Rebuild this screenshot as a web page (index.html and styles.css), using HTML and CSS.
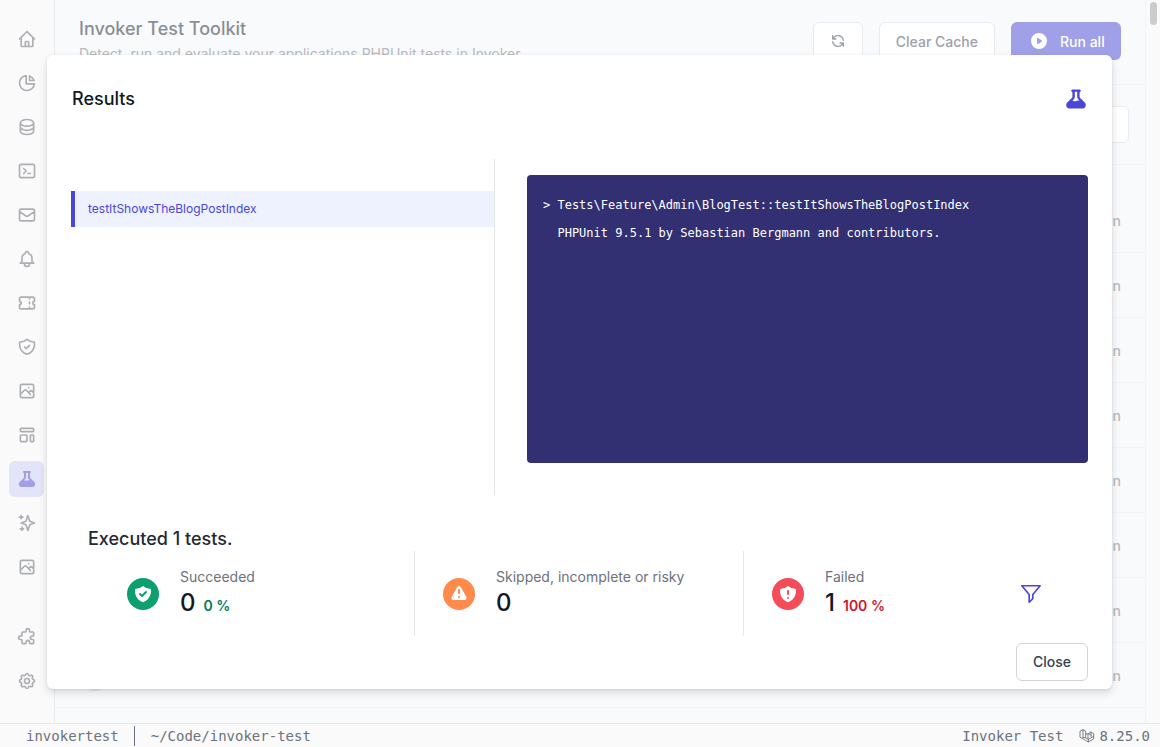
FILE: index.html
```html
<!DOCTYPE html>
<html lang="en">

<head>
	<meta charset="utf-8" />
	<meta name="viewport" content="width=device-width, initial-scale=1" />
	<title>Invoker Test Toolkit</title>
	<link rel="stylesheet" href="styles.css">
</head>

<body>
	<div class="app">
		<div class="shell">
			<nav class="sidebar">
				<div class="nav-group">
					<a class="nav-item"><svg viewBox="0 0 24 24"><path d="M3 12l2-2m0 0l7-7 7 7M5 10v10a1 1 0 001 1h3m10-11l2 2m-2-2v10a1 1 0 01-1 1h-3m-6 0a1 1 0 001-1v-4a1 1 0 011-1h2a1 1 0 011 1v4a1 1 0 001 1m-6 0h6"/></svg></a>
					<a class="nav-item"><svg viewBox="0 0 24 24"><path d="M11 3.055A9.001 9.001 0 1020.945 13H11V3.055z"/><path d="M20.488 9H15V3.512A9.025 9.025 0 0120.488 9z"/></svg></a>
					<a class="nav-item"><svg viewBox="0 0 24 24"><path d="M4 7v10c0 2.21 3.582 4 8 4s8-1.79 8-4V7M4 7c0 2.21 3.582 4 8 4s8-1.79 8-4M4 7c0-2.21 3.582-4 8-4s8 1.79 8 4m0 5c0 2.21-3.582 4-8 4s-8-1.79-8-4"/></svg></a>
					<a class="nav-item"><svg viewBox="0 0 24 24"><path d="M8 9l3 3-3 3m5 0h3M5 20h14a2 2 0 002-2V6a2 2 0 00-2-2H5a2 2 0 00-2 2v12a2 2 0 002 2z"/></svg></a>
					<a class="nav-item"><svg viewBox="0 0 24 24"><path d="M3 8l7.89 5.26a2 2 0 002.22 0L21 8M5 19h14a2 2 0 002-2V7a2 2 0 00-2-2H5a2 2 0 00-2 2v10a2 2 0 002 2z"/></svg></a>
					<a class="nav-item"><svg viewBox="0 0 24 24"><path d="M15 17h5l-1.405-1.405A2.032 2.032 0 0118 14.158V11a6.002 6.002 0 00-4-5.659V5a2 2 0 10-4 0v.341C7.67 6.165 6 8.388 6 11v3.159c0 .538-.214 1.055-.595 1.436L4 17h5m6 0v1a3 3 0 11-6 0v-1m6 0H9"/></svg></a>
					<a class="nav-item"><svg viewBox="0 0 24 24"><path d="M15 5v2m0 4v2m0 4v2M5 5a2 2 0 00-2 2v3a2 2 0 110 4v3a2 2 0 002 2h14a2 2 0 002-2v-3a2 2 0 110-4V7a2 2 0 00-2-2H5z"/></svg></a>
					<a class="nav-item"><svg viewBox="0 0 24 24"><path d="M9 12l2 2 4-4m5.618-4.016A11.955 11.955 0 0112 2.944a11.955 11.955 0 01-8.618 3.04A12.02 12.02 0 003 9c0 5.591 3.824 10.29 9 11.622 5.176-1.332 9-6.03 9-11.622 0-1.042-.133-2.052-.382-3.016z"/></svg></a>
					<a class="nav-item"><svg viewBox="0 0 24 24"><path d="M4 16l4.586-4.586a2 2 0 012.828 0L16 16m-2-2l1.586-1.586a2 2 0 012.828 0L20 14m-6-6h.01M6 20h12a2 2 0 002-2V6a2 2 0 00-2-2H6a2 2 0 00-2 2v12a2 2 0 002 2z"/></svg></a>
					<a class="nav-item"><svg viewBox="0 0 24 24"><path d="M4 5a1 1 0 011-1h14a1 1 0 011 1v2a1 1 0 01-1 1H5a1 1 0 01-1-1V5zM4 13a1 1 0 011-1h6a1 1 0 011 1v6a1 1 0 01-1 1H5a1 1 0 01-1-1v-6zM16 13a1 1 0 011-1h2a1 1 0 011 1v6a1 1 0 01-1 1h-2a1 1 0 01-1-1v-6z"/></svg></a>
					<a class="nav-item active"><svg class="solid" viewBox="0 0 20 20"><path fill-rule="evenodd" clip-rule="evenodd" d="M7 2a1 1 0 00-.707 1.707L7 4.414v3.758a1 1 0 01-.293.707l-4 4C.817 14.769 2.156 18 4.828 18h10.343c2.673 0 4.012-3.231 2.122-5.121l-4-4A1 1 0 0113 8.172V4.414l.707-.707A1 1 0 0013 2H7zm2 6.172V4h2v4.172a3 3 0 00.879 2.12l1.027 1.028a4 4 0 00-2.171.102l-.47.156a4 4 0 01-2.53 0l-.563-.187a1.993 1.993 0 00-.114-.035l1.063-1.063A3 3 0 009 8.172z"/></svg></a>
					<a class="nav-item"><svg viewBox="0 0 24 24"><path d="M5 3v4M3 5h4M6 17v4m-2-2h4m5-16l2.286 6.857L21 12l-5.714 2.143L13 21l-2.286-6.857L5 12l5.714-2.143L13 3z"/></svg></a>
					<a class="nav-item"><svg viewBox="0 0 24 24"><path d="M4 16l4.586-4.586a2 2 0 012.828 0L16 16m-2-2l1.586-1.586a2 2 0 012.828 0L20 14m-6-6h.01M6 20h12a2 2 0 002-2V6a2 2 0 00-2-2H6a2 2 0 00-2 2v12a2 2 0 002 2z"/></svg></a>
				</div>
				<div class="nav-group">
					<a class="nav-item"><svg viewBox="0 0 24 24"><path d="M11 4a2 2 0 114 0v1a1 1 0 001 1h3a1 1 0 011 1v3a1 1 0 01-1 1h-1a2 2 0 100 4h1a1 1 0 011 1v3a1 1 0 01-1 1h-3a1 1 0 01-1-1v-1a2 2 0 10-4 0v1a1 1 0 01-1 1H7a1 1 0 01-1-1v-3a1 1 0 00-1-1H4a2 2 0 110-4h1a1 1 0 001-1V7a1 1 0 011-1h3a1 1 0 001-1V4z"/></svg></a>
					<a class="nav-item"><svg viewBox="0 0 24 24"><path d="M10.325 4.317c.426-1.756 2.924-1.756 3.35 0a1.724 1.724 0 002.573 1.066c1.543-.94 3.31.826 2.37 2.37a1.724 1.724 0 001.065 2.572c1.756.426 1.756 2.924 0 3.35a1.724 1.724 0 00-1.066 2.573c.94 1.543-.826 3.31-2.37 2.37a1.724 1.724 0 00-2.572 1.065c-.426 1.756-2.924 1.756-3.35 0a1.724 1.724 0 00-2.573-1.066c-1.543.94-3.31-.826-2.37-2.37a1.724 1.724 0 00-1.065-2.572c-1.756-.426-1.756-2.924 0-3.35a1.724 1.724 0 001.066-2.573c-.94-1.543.826-3.31 2.37-2.37.996.608 2.296.07 2.572-1.065z"/><path d="M15 12a3 3 0 11-6 0 3 3 0 016 0z"/></svg></a>
				</div>
			</nav>

			<main class="main">
				<header class="page-header">
					<div class="page-title">
						<h1>Invoker Test Toolkit</h1>
						<p>Detect, run and evaluate your applications PHPUnit tests in Invoker.</p>
					</div>
					<div class="page-actions">
						<button class="btn btn-icon"><svg viewBox="0 0 24 24"><path d="M4 4v5h.582m15.356 2A8.001 8.001 0 004.582 9m0 0H9m11 11v-5h-.581m0 0a8.003 8.003 0 01-15.357-2m15.357 2H15"/></svg></button>
						<button class="btn">Clear Cache</button>
						<button class="btn btn-primary"><svg class="solid" viewBox="0 0 20 20"><path fill-rule="evenodd" clip-rule="evenodd" d="M10 18a8 8 0 100-16 8 8 0 000 16zM9.555 7.168A1 1 0 008 8v4a1 1 0 001.555.832l3-2a1 1 0 000-1.664l-3-2z"/></svg>Run all</button>
					</div>
				</header>
				<div class="toolbar"><div class="search-box"></div></div>
				<div class="table-head"></div>
				<div class="test-row"><span class="row-avatar"></span><span class="row-action">Run</span></div>
				<div class="test-row"><span class="row-avatar"></span><span class="row-action">Run</span></div>
				<div class="test-row"><span class="row-avatar"></span><span class="row-action">Run</span></div>
				<div class="test-row"><span class="row-avatar"></span><span class="row-action">Run</span></div>
				<div class="test-row"><span class="row-avatar"></span><span class="row-action">Run</span></div>
				<div class="test-row"><span class="row-avatar"></span><span class="row-action">Run</span></div>
				<div class="test-row"><span class="row-avatar"></span><span class="row-action">Run</span></div>
				<div class="test-row"><span class="row-avatar"></span><span class="row-action">Run</span></div>
			</main>

			<div class="scrollbar"><div class="scrollbar-thumb"></div></div>

			<div class="overlay">
				<section class="modal">
					<div class="modal-header">
						<h2>Results</h2>
						<svg class="solid" viewBox="0 0 20 20"><path fill-rule="evenodd" clip-rule="evenodd" d="M7 2a1 1 0 00-.707 1.707L7 4.414v3.758a1 1 0 01-.293.707l-4 4C.817 14.769 2.156 18 4.828 18h10.343c2.673 0 4.012-3.231 2.122-5.121l-4-4A1 1 0 0113 8.172V4.414l.707-.707A1 1 0 0013 2H7zm2 6.172V4h2v4.172a3 3 0 00.879 2.12l1.027 1.028a4 4 0 00-2.171.102l-.47.156a4 4 0 01-2.53 0l-.563-.187a1.993 1.993 0 00-.114-.035l1.063-1.063A3 3 0 009 8.172z"/></svg>
					</div>
					<div class="split">
						<div class="test-list">
							<div class="test-item">testItShowsTheBlogPostIndex</div>
						</div>
						<div class="output-wrap">
							<pre class="terminal">&gt; Tests\Feature\Admin\BlogTest::testItShowsTheBlogPostIndex

  PHPUnit 9.5.1 by Sebastian Bergmann and contributors.</pre>
						</div>
					</div>
					<h3 class="summary-title">Executed 1 tests.</h3>
					<div class="stats">
						<div class="stat">
							<span class="stat-icon green"><svg class="solid" viewBox="0 0 20 20"><path fill-rule="evenodd" clip-rule="evenodd" d="M2.166 4.999A11.954 11.954 0 0010 1.944 11.954 11.954 0 0017.834 5c.11.65.166 1.32.166 2.001 0 5.225-3.34 9.67-8 11.317C5.34 16.67 2 12.225 2 7c0-.682.057-1.35.166-2.001zm11.541 3.708a1 1 0 00-1.414-1.414L9 10.586 7.707 9.293a1 1 0 00-1.414 1.414l2 2a1 1 0 001.414 0l4-4z"/></svg></span>
							<div class="stat-text">
								<div class="stat-label">Succeeded</div>
								<div class="stat-value">0<span class="stat-percent text-green">0 %</span></div>
							</div>
						</div>
						<div class="stat">
							<span class="stat-icon orange"><svg class="solid" viewBox="0 0 20 20"><path fill-rule="evenodd" clip-rule="evenodd" d="M8.257 3.099c.765-1.36 2.722-1.36 3.486 0l5.58 9.92c.75 1.334-.213 2.98-1.742 2.98H4.42c-1.53 0-2.493-1.646-1.743-2.98l5.58-9.92zM11 13a1 1 0 11-2 0 1 1 0 012 0zm-1-8a1 1 0 00-1 1v3a1 1 0 002 0V6a1 1 0 00-1-1z"/></svg></span>
							<div class="stat-text">
								<div class="stat-label">Skipped, incomplete or risky</div>
								<div class="stat-value">0</div>
							</div>
						</div>
						<div class="stat stat-last">
							<span class="stat-icon red"><svg class="solid" viewBox="0 0 20 20"><path fill-rule="evenodd" clip-rule="evenodd" d="M10 1.944A11.954 11.954 0 012.166 5C2.056 5.649 2 6.319 2 7c0 5.225 3.34 9.67 8 11.317C14.66 16.67 18 12.225 18 7c0-.682-.057-1.35-.166-2.001A11.954 11.954 0 0110 1.944zM11 14a1 1 0 11-2 0 1 1 0 012 0zm0-7a1 1 0 10-2 0v3a1 1 0 102 0V7z"/></svg></span>
							<div class="stat-text">
								<div class="stat-label">Failed</div>
								<div class="stat-value">1<span class="stat-percent text-red">100 %</span></div>
							</div>
							<svg class="filter-icon" viewBox="0 0 24 24"><path d="M2 3h20l-8 9.5V17l-4 4v-8.5L2 3z"/></svg>
						</div>
					</div>
					<div class="modal-footer">
						<button class="btn-close">Close</button>
					</div>
				</section>
			</div>
		</div>

		<footer class="statusbar">
			<div class="status-left">
				<span>invokertest</span>
				<span class="status-sep"></span>
				<span>~/Code/invoker-test</span>
			</div>
			<div class="status-right">
				<span>Invoker Test</span>
				<svg class="laravel" viewBox="0 0 18 18"><path d="M1.5 3.5l3-1.7 3 1.7v7.5l3 1.7v3l-3-1.700-6-3.400zM4.500 1.800v8.800M7.500 11l-3-.4M10.500 12.700l6-3.400v-3l-3-1.700-3 1.700zM13.500 4.600v5M10.500 6.300l3 1.700M7.500 7l3-.7M10.500 15.700l6-3.400v-3"/></svg>
				<span>8.25.0</span>
			</div>
		</footer>
	</div>
</body>

</html>
```

FILE: styles.css
```css
* {
	box-sizing: border-box;
}
body {
	margin: 0;
	background-color: #f3f4f6;
	color: #111827;
	font-family: Inter, "Noto Sans", sans-serif;
	font-size: 14px;
	overflow: hidden;
}
h1, h2, h3, p {
	margin: 0;
}
svg {
	display: block;
	fill: none;
	stroke: currentColor;
	stroke-width: 2;
	stroke-linecap: round;
	stroke-linejoin: round;
}
svg.solid {
	fill: currentColor;
	stroke: none;
}
.app {
	display: flex;
	flex-direction: column;
	height: 100vh;
}
.shell {
	position: relative;
	display: flex;
	flex: 1;
	min-height: 0;
	overflow: hidden;
}

/* sidebar */
.sidebar {
	display: flex;
	flex-direction: column;
	justify-content: space-between;
	width: 55px;
	padding: 21px 0 24px 9px;
	background-color: #f5f5f6;
	border-right: 1px solid #d1d5db;
}
.nav-group {
	display: flex;
	flex-direction: column;
	gap: 8px;
}
.nav-item {
	display: flex;
	align-items: center;
	justify-content: center;
	width: 35px;
	height: 36px;
	border-radius: 6px;
	color: #5a5f69;
}
.nav-item svg {
	width: 20px;
	height: 20px;
}
.nav-item.active {
	background-color: #c7c8ef;
	color: #3f41d1;
}

/* page behind the dialog */
.main {
	flex: 1;
	min-width: 0;
	overflow: hidden;
}
.page-header {
	display: flex;
	justify-content: space-between;
	height: 85px;
	padding: 15px 24px 0 24px;
	border-bottom: 1px solid #e5e7eb;
}
.page-title h1 {
	font-size: 18px;
	line-height: 28px;
	font-weight: 500;
}
.page-title p {
	margin-top: 1px;
	line-height: 20px;
	color: #6b7280;
}
.page-actions {
	display: flex;
	gap: 16px;
	margin-top: 7px;
	height: 38px;
}
.btn {
	display: flex;
	align-items: center;
	height: 38px;
	padding: 0 16px;
	border: 1px solid #d1d5db;
	border-radius: 6px;
	background-color: #ffffff;
	color: #374151;
	font-family: inherit;
	font-size: 14px;
	font-weight: 500;
}
.btn-icon {
	width: 50px;
	justify-content: center;
}
.btn-icon svg {
	width: 16px;
	height: 16px;
}
.btn-primary {
	width: 110px;
	padding: 0 0 0 18px;
	border: 0;
	background-color: #3f41d1;
	color: #ffffff;
}
.btn-primary svg {
	width: 20px;
	height: 20px;
	margin-right: 11px;
}
.toolbar {
	display: flex;
	justify-content: flex-end;
	height: 80px;
	padding: 21px 16px 0 0;
	border-bottom: 1px solid #e5e7eb;
}
.search-box {
	width: 300px;
	height: 37px;
	border: 1px solid #d1d5db;
	border-radius: 6px;
	background-color: #ffffff;
}
.table-head {
	height: 23px;
}
.test-row {
	display: flex;
	align-items: center;
	justify-content: space-between;
	height: 65px;
	padding: 0 24px 0 24px;
	border-bottom: 1px solid #e5e7eb;
}
.row-avatar {
	width: 32px;
	height: 32px;
	border-radius: 50%;
	background-color: #d1d5db;
}
.row-action {
	color: #6b7280;
	font-weight: 500;
}
.scrollbar {
	width: 15px;
	padding: 2px 3px 0 4px;
	border-left: 1px solid #e5e7eb;
	background-color: #f5f5f6;
}
.scrollbar-thumb {
	height: 23px;
	border-radius: 4px;
	background-color: #999999;
}

/* dialog */
.overlay {
	position: absolute;
	inset: 0;
	display: flex;
	padding: 55px 48px 34px 47px;
	background-color: rgba(255, 255, 255, 0.5);
}
.modal {
	display: flex;
	flex-direction: column;
	width: 100%;
	border-radius: 6px;
	background-color: #ffffff;
	box-shadow: 0 4px 10px rgba(0, 0, 0, 0.12), 0 1px 3px rgba(0, 0, 0, 0.08);
}
.modal-header {
	display: flex;
	align-items: flex-start;
	justify-content: space-between;
	height: 104px;
	padding: 33px 24px 0 25px;
	color: #4a46d8;
}
.modal-header h2 {
	font-size: 18px;
	line-height: 22px;
	font-weight: 500;
	color: #111827;
}
.modal-header svg {
	width: 24px;
	height: 24px;
	margin-top: -1px;
}
.split {
	display: flex;
	height: 336px;
	padding-left: 24px;
}
.test-list {
	width: 424px;
	padding-top: 32px;
	border-right: 1px solid #e5e7eb;
}
.test-item {
	height: 36px;
	padding-left: 13px;
	border-left: 4px solid #4a46d8;
	background-color: #eef2ff;
	color: #4a46d8;
	font-size: 12px;
	line-height: 36px;
}
.output-wrap {
	flex: 1;
	padding: 16px 24px 32px 32px;
}
.terminal {
	height: 288px;
	margin: 0;
	padding: 23px 16px 16px;
	border-radius: 4px;
	background-color: #322f72;
	color: #ffffff;
	font-family: "DejaVu Sans Mono", monospace;
	font-size: 12px;
	line-height: 14px;
}
.summary-title {
	margin: 30px 0 -2px 41px;
	font-size: 18px;
	line-height: 28px;
	font-weight: 500;
	color: #1f2937;
}
.stats {
	display: grid;
	grid-template-columns: 330px 329px 1fr;
	height: 85px;
	padding: 0 24px 0 38px;
}
.stat {
	display: flex;
	align-items: center;
	gap: 21px;
	padding-left: 28px;
	border-right: 1px solid #e5e7eb;
}
.stat:first-child {
	padding-left: 42px;
}
.stat-last {
	border-right: 0;
}
.stat-icon {
	display: flex;
	align-items: center;
	justify-content: center;
	width: 32px;
	height: 32px;
	border-radius: 50%;
	color: #ffffff;
}
.stat-icon svg {
	width: 20px;
	height: 20px;
}
.green {
	background-color: #0e9f6e;
}
.orange {
	background-color: #ff8a4c;
}
.red {
	background-color: #f44c58;
}
.stat-text {
	margin-top: -2px;
}
.stat-label {
	line-height: 20px;
	color: #6b7280;
}
.stat-value {
	display: flex;
	align-items: baseline;
	gap: 8px;
	height: 32px;
	font-size: 24px;
	line-height: 32px;
	font-weight: 500;
	color: #111827;
}
.stat-percent {
	font-size: 14px;
	font-weight: 600;
}
.text-green {
	color: #057a55;
}
.text-red {
	color: #d0152f;
}
.filter-icon {
	width: 22px;
	height: 22px;
	margin-left: auto;
	margin-right: 46px;
	color: #4a46d8;
	stroke-width: 1.8;
}
.modal-footer {
	display: flex;
	justify-content: flex-end;
	padding: 7px 24px 8px 0;
}
.btn-close {
	width: 72px;
	height: 38px;
	padding: 0 0 2px;
	border: 1px solid #d1d5db;
	border-radius: 6px;
	background-color: #ffffff;
	color: #374151;
	font-family: inherit;
	font-size: 14px;
	font-weight: 500;
}

/* status bar */
.statusbar {
	display: flex;
	justify-content: space-between;
	align-items: center;
	height: 24px;
	padding: 0 10px 0 26px;
	border-top: 1px solid #e5e7eb;
	background-color: #fafafa;
	color: #6b7280;
	font-family: "DejaVu Sans Mono", monospace;
	font-size: 14px;
}
.status-left,
.status-right {
	display: flex;
	align-items: center;
}
.status-sep {
	width: 1px;
	height: 20px;
	margin: 0 16px 0 15px;
	background-color: #6b7280;
}
.laravel {
	width: 16px;
	height: 16px;
	margin: 0 4px 0 16px;
	stroke-width: 1;
}
```
